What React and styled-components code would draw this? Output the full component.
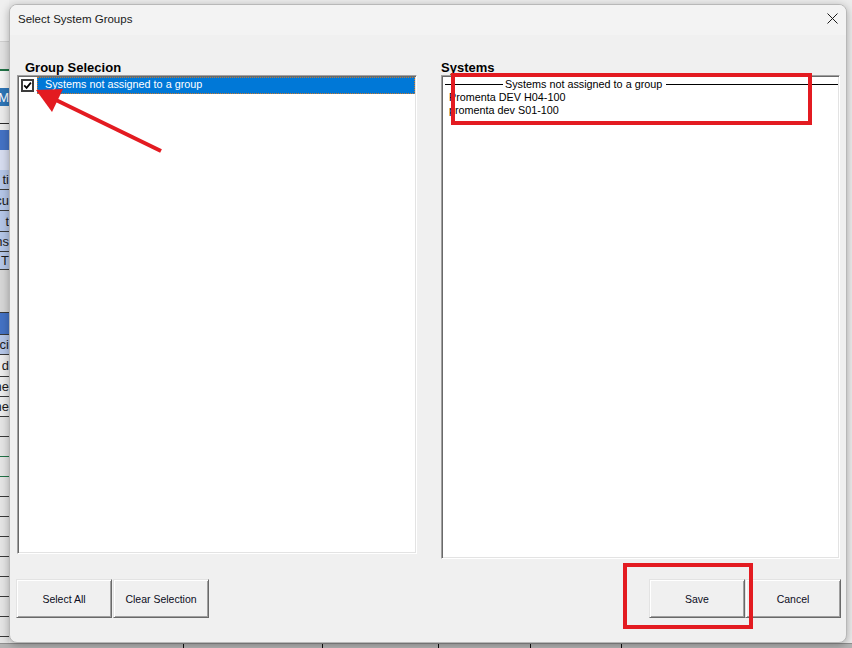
import React from 'react';
import styled, {createGlobalStyle} from 'styled-components';

const GlobalStyle = createGlobalStyle`
  html, body {
    margin: 0;
    padding: 0;
  }
  body {
    font-family: "Liberation Sans", Arial, sans-serif;
  }
`;

const Screen = styled.div`
  position: relative;
  width: 852px;
  height: 648px;
  overflow: hidden;
  background: #ececec;
`;

// spreadsheet peeking out around the dialog
const Sheet = styled.div`
  display: flex;
  flex-direction: column;
  height: 100%;
`;

const SheetRow = styled.div`
  display: flex;
  flex: none;
  height: ${props => props.h + "px"};
`;

const EdgeCell = styled.div`
  box-sizing: border-box;
  width: 9px;
  overflow: hidden;
  display: flex;
  align-items: center;
  justify-content: flex-end;
  white-space: nowrap;
  background: ${props => props.bg};
  border-bottom: ${props => props.line ? "1px solid " + props.line : "none"};
  color: ${props => props.ink || "#1b1b1b"};
  font: 13px "Liberation Sans", Arial, sans-serif;
`;

const BottomStrip = styled.div`
  display: flex;
  flex: 1;
  background: #b3b3b3;
  border-top: 1px solid #8f8f8f;
`;

const StripCell = styled.div`
  box-sizing: border-box;
  width: ${props => props.w ? props.w + "px" : "auto"};
  flex: ${props => props.w ? "none" : 1};
  border-right: ${props => props.w ? "1px solid #111" : "none"};
`;

const Dialog = styled.section`
  position: absolute;
  left: 9px;
  top: 4px;
  width: 838px;
  height: 639px;
  box-sizing: border-box;
  display: flex;
  flex-direction: column;
  overflow: hidden;
  background: #f0f0f0;
  border: 1px solid #b8b8b8;
  border-radius: 8px;
  box-shadow: 0 2px 9px rgba(0, 0, 0, 0.3);
`;

const TitleBar = styled.header`
  flex: none;
  height: 30px;
  box-sizing: border-box;
  display: flex;
  align-items: center;
  justify-content: space-between;
  padding: 0 8px 2px 8px;
  background: #f3f3f3;
  color: #1a1a1a;
  font: 11.5px "Liberation Sans", Arial, sans-serif;
`;

const CloseButton = styled.svg`
  display: block;
  margin-top: -2px;
`;

const Body = styled.div`
  flex: 1;
  display: flex;
  flex-direction: column;
  padding: 25px 5px 0 6px;
`;

const Panels = styled.div`
  display: grid;
  grid-template-columns: 400px 399px;
  column-gap: 24px;
  align-items: start;
  padding-left: 1px;
`;

const Panel = styled.div`
  display: flex;
  flex-direction: column;
`;

const Label = styled.h2`
  margin: 0;
  padding-left: ${props => (props.indent || 0) + "px"};
  font: bold 13px/15px "Liberation Sans", Arial, sans-serif;
  color: #000;
`;

const ListBox = styled.div`
  box-sizing: border-box;
  height: ${props => props.h + "px"};
  padding: 1px;
  background: #fff;
  border-style: solid;
  border-width: 1px;
  border-color: #a0a0a0 #fff #fff #a0a0a0;
  box-shadow: inset 1px 1px 0 #696969, inset -1px -1px 0 #e3e3e3;
  font: 10.8px/13px "Liberation Sans", Arial, sans-serif;
  color: #000;
  white-space: nowrap;
`;

const GroupRow = styled.div`
  display: flex;
  align-items: center;
  height: 17px;
`;

const Check = styled.span`
  box-sizing: border-box;
  flex: none;
  width: 13px;
  height: 13px;
  margin: 0 3px 0 2px;
  display: flex;
  align-items: center;
  justify-content: center;
  background: #fff;
  border: 2px solid #3c3c3c;
`;

const GroupName = styled.span`
  flex: 1;
  align-self: stretch;
  box-sizing: border-box;
  display: flex;
  align-items: center;
  padding: 0 0 2px 7px;
  background: ${props => props.selected ? "#0078d7" : "transparent"};
  color: ${props => props.selected ? "#fff" : "#000"};
  border: 1px dotted ${props => props.selected ? "#c9792e" : "transparent"};
`;

const GroupHeading = styled.div`
  display: flex;
  align-items: center;
  height: 13px;
  margin-top: 1px;
  padding-left: 2px;
`;

const Rule = styled.span`
  height: 1px;
  background: #000;
  flex: ${props => props.grow ? 1 : "none"};
  width: ${props => props.w ? props.w + "px" : "auto"};
  margin: 0 ${props => (props.right || 0) + "px"} 0 ${props => (props.left || 0) + "px"};
`;

const SystemRow = styled.div`
  height: 13px;
  padding-left: 6px;
`;

const ButtonBar = styled.div`
  display: flex;
  justify-content: space-between;
  margin-top: 20px;
`;

const ButtonGroup = styled.div`
  display: flex;
  gap: ${props => props.gap + "px"};
`;

const Button = styled.button`
  box-sizing: border-box;
  width: 96px;
  height: 39px;
  padding: 0;
  background: #f0f0f0;
  border-style: solid;
  border-width: 1px;
  border-color: #e3e3e3 #696969 #696969 #e3e3e3;
  box-shadow: inset 1px 1px 0 #fff, inset -1px -1px 0 #a0a0a0;
  border-radius: 0;
  font: 10.5px "Liberation Sans", Arial, sans-serif;
  color: #0c0c1c;
`;

// red markers drawn on top of the dialog
const Callout = styled.div`
  position: absolute;
  box-sizing: border-box;
  left: ${props => props.x + "px"};
  top: ${props => props.y + "px"};
  width: ${props => props.w + "px"};
  height: ${props => props.h + "px"};
  border: 4px solid #e31b21;
  pointer-events: none;
`;

const Arrow = styled.svg`
  position: absolute;
  left: 30px;
  top: 80px;
  pointer-events: none;
`;

const sheetRows = [
  [41, "#efefef"], [1, "#cfcfcf"], [27, "#e2e2e2"], [2, "#217346"],
  [17, "#f4f4f4"], [18, "#2e75b6", null, "M", "#fff"], [17, "#ebebeb"],
  [1, "#2b2b2b"], [6, "#ebebeb"], [20, "#4472c4"], [20, "#d6dcef"],
  [20, "#b4c6e7", "#3a3a3a", "ti"], [21, "#b4c6e7", "#3a3a3a", "cu"],
  [21, "#b4c6e7", "#3a3a3a", "t"], [20, "#b4c6e7", "#3a3a3a", "ns"],
  [18, "#b4c6e7", "#3a3a3a", "c T"], [43, "#d6d6d6", "#3a3a3a"],
  [22, "#4472c4", "#3a3a3a"], [20, "#b4c6e7", "#3a3a3a", "ci"],
  [22, "#ececec", "#3a3a3a", "d"], [20, "#ececec", "#3a3a3a", "ne"],
  [20, "#ececec", "#3a3a3a", "ne"],
  [20, "#e4e4e4", "#3a3a3a"], [20, "#e4e4e4", "#217346"], [20, "#e4e4e4", "#217346"],
  [20, "#e4e4e4", "#3a3a3a"], [20, "#e4e4e4", "#3a3a3a"], [20, "#e4e4e4", "#3a3a3a"],
  [20, "#e4e4e4", "#3a3a3a"], [20, "#e4e4e4", "#3a3a3a"], [20, "#e4e4e4", "#3a3a3a"],
  [20, "#e4e4e4", "#3a3a3a"], [20, "#e4e4e4", "#3a3a3a"], [6, "#e4e4e4"]
];

const stripCells = [184, 139, 116, 92, 91];

const systems = ["Promenta DEV H04-100", "promenta dev S01-100"];

function App() {
  return (
    <>
      <GlobalStyle />
      <Screen>
        <Sheet>
          {sheetRows.map(([h, bg, line, text, ink], i) => (
            <SheetRow key={i} h={h}>
              <EdgeCell bg={bg} line={line} ink={ink}>{text}</EdgeCell>
            </SheetRow>
          ))}
          <BottomStrip>
            {stripCells.map((w, i) => <StripCell key={i} w={w} />)}
            <StripCell />
          </BottomStrip>
        </Sheet>

        <Dialog>
          <TitleBar>
            <span>Select System Groups</span>
            <CloseButton width="11" height="11" viewBox="0 0 11 11">
              <path d="M0.5 0.5 L10.5 10.5 M10.5 0.5 L0.5 10.5" stroke="#1a1a1a" strokeWidth="1" fill="none" />
            </CloseButton>
          </TitleBar>

          <Body>
            <Panels>
              <Panel>
                <Label indent={8}>Group Selecion</Label>
                <ListBox h={479}>
                  <GroupRow>
                    <Check>
                      <svg width="9" height="9" viewBox="0 0 9 9">
                        <path d="M1.2 4.4 L3.6 6.9 L7.9 1.6" stroke="#000" strokeWidth="1.7" fill="none" />
                      </svg>
                    </Check>
                    <GroupName selected>Systems not assigned to a group</GroupName>
                  </GroupRow>
                </ListBox>
              </Panel>

              <Panel>
                <Label>Systems</Label>
                <ListBox h={484}>
                  <GroupHeading>
                    <Rule w={58} right={2} />
                    <span>Systems not assigned to a group</span>
                    <Rule grow left={4} />
                  </GroupHeading>
                  {systems.map(name => <SystemRow key={name}>{name}</SystemRow>)}
                </ListBox>
              </Panel>
            </Panels>

            <ButtonBar>
              <ButtonGroup gap={1}>
                <Button>Select All</Button>
                <Button>Clear Selection</Button>
              </ButtonGroup>
              <ButtonGroup gap={0}>
                <Button>Save</Button>
                <Button>Cancel</Button>
              </ButtonGroup>
            </ButtonBar>
          </Body>
        </Dialog>

        <Callout x={451} y={73} w={361} h={52} />
        <Callout x={623} y={563} w={130} h={66} />
        <Arrow width="140" height="80" viewBox="0 0 140 80">
          <line x1="131" y1="71" x2="26" y2="20" stroke="#e31b21" strokeWidth="4" />
          <polygon points="6,10 22,32 33,9" fill="#e31b21" />
        </Arrow>
      </Screen>
    </>
  );
}

export default App;
